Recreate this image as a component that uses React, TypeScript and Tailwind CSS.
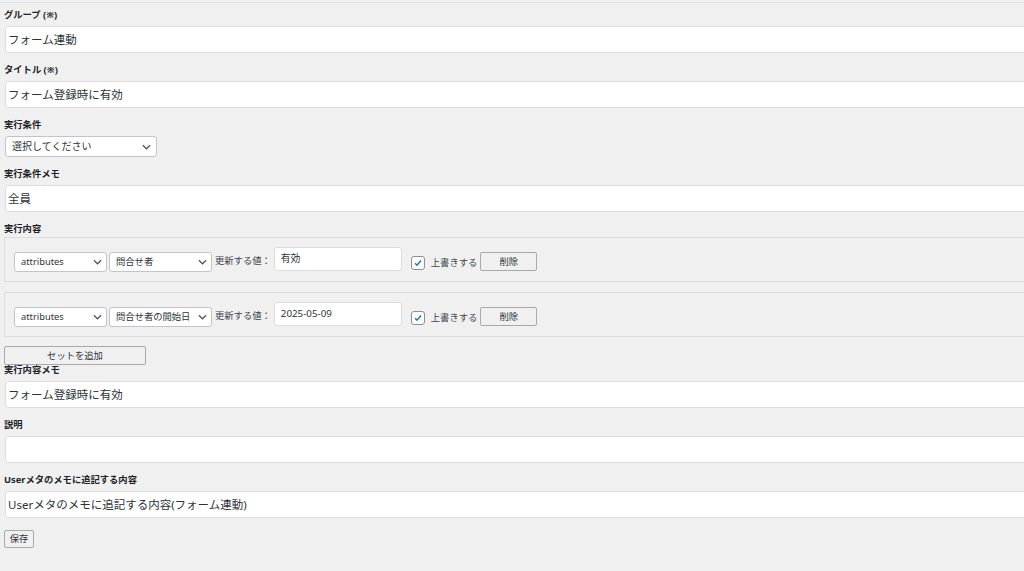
import { useState } from "react";

function Chevron() {
  return (
    <svg viewBox="0 0 10 6" className="w-[9px] h-[6px] shrink-0" fill="none" stroke="#50575e" strokeWidth="1.4">
      <path d="M1 1l4 4 4-4" />
    </svg>
  );
}

function Field({ label, value, className = "mb-[10px]" }: { label: string; value: string; className?: string }) {
  return (
    <div className={className}>
      <div className="text-[9.3px] leading-[14px] font-bold text-[#1d2327] pl-[4px] mb-[4px]">{label}</div>
      <div className="ml-[5px] w-[calc(100%+20px)] h-[27px] bg-white border border-[#dcdcde] rounded-[3px] flex items-center pl-[2px] text-[11.5px] text-[#2c3338]">
        {value}
      </div>
    </div>
  );
}

function SelectBox({ value, width }: { value: string; width: string }) {
  return (
    <div className={`${width} h-[20px] bg-white border border-[#c3c4c7] rounded-[3px] flex items-center justify-between pl-[6px] pr-[4px] text-[9.3px] text-[#2c3338] mt-[5px]`}>
      <span className="whitespace-nowrap overflow-hidden">{value}</span>
      <Chevron />
    </div>
  );
}

function SetRow({ field, value }: { field: string; value: string }) {
  const [checked, setChecked] = useState(true);
  return (
    <div className="ml-[4px] w-[calc(100%+20px)] border border-[#dcdcde] pt-[9px] pb-[9px] pl-[9px]">
      <div className="flex items-start">
        <SelectBox value="attributes" width="w-[93px]" />
        <div className="ml-[2px]">
          <SelectBox value={field} width="w-[103px]" />
        </div>
        <span className="ml-[3px] mt-[8px] text-[9.3px] leading-[12px] text-[#3c434a] whitespace-nowrap">更新する値：</span>
        <div className="ml-[3px] w-[128px] h-[24px] bg-white border border-[#dcdcde] rounded-[3px] flex items-center pl-[6px] text-[9.8px] text-[#2c3338]">
          {value}
        </div>
        {/* overwrite checkbox */}
        <button
          onClick={() => setChecked(!checked)}
          className="ml-[9px] mt-[9px] w-[14px] h-[14px] bg-white border border-[#8c8f94] rounded-[3px] flex items-center justify-center"
        >
          {checked && (
            <svg viewBox="0 0 12 12" className="w-[10px] h-[10px]" fill="none" stroke="#2271b1" strokeWidth="1.8">
              <path d="M2.5 6.2l2.3 2.4L9.6 3" />
            </svg>
          )}
        </button>
        <span className="ml-[6px] mt-[10px] text-[9.3px] leading-[12px] text-[#3c434a] whitespace-nowrap">上書きする</span>
        <button className="ml-[3px] mt-[5px] w-[57px] h-[19px] bg-[#f0f0f0] border border-[#a7aaad] rounded-[2px] text-[9.3px] text-[#2c3338]">
          削除
        </button>
      </div>
    </div>
  );
}

export default function App() {
  return (
    <div className="min-h-[571px] w-full overflow-hidden bg-[#f0f0f1] font-['Noto_Sans','Noto_Sans_CJK_JP',sans-serif]">
      <div className="h-[3px] border-b border-[#e2e2e4]" />
      <div className="pt-[5px]">
        <Field label="グループ (※)" value="フォーム連動" />
        <Field label="タイトル (※)" value="フォーム登録時に有効" />

        <div className="mb-[10px]">
          <div className="text-[9.3px] leading-[14px] font-bold text-[#1d2327] pl-[4px] mb-[4px]">実行条件</div>
          <div className="ml-[5px] w-[152px] h-[21px] bg-white border border-[#c3c4c7] rounded-[3px] flex items-center justify-between pl-[6px] pr-[5px] text-[10px] text-[#2c3338]">
            <span>選択してください</span>
            <Chevron />
          </div>
        </div>

        <Field label="実行条件メモ" value="全員" />

        <div className="text-[9.3px] leading-[14px] font-bold text-[#1d2327] pl-[4px] mb-[1px]">実行内容</div>
        <div className="flex flex-col gap-[10px]">
          <SetRow field="問合せ者" value="有効" />
          <SetRow field="問合せ者の開始日" value="2025-05-09" />
        </div>
        <button className="ml-[4px] mt-[9px] w-[142px] h-[19px] bg-[#f0f0f0] border border-[#a7aaad] rounded-[2px] text-[9.3px] text-[#2c3338]">
          セットを追加
        </button>

        <Field label="実行内容メモ" value="フォーム登録時に有効" className="-mt-[2px] mb-[10px]" />
        <Field label="説明" value="" />
        <Field label="Userメタのメモに追記する内容" value="Userメタのメモに追記する内容(フォーム連動)" className="" />

        <button className="ml-[4px] mt-[12px] w-[30px] h-[18px] bg-[#f0f0f0] border border-[#a7aaad] rounded-[2px] text-[9.3px] text-[#2c3338]">
          保存
        </button>
      </div>
    </div>
  );
}
